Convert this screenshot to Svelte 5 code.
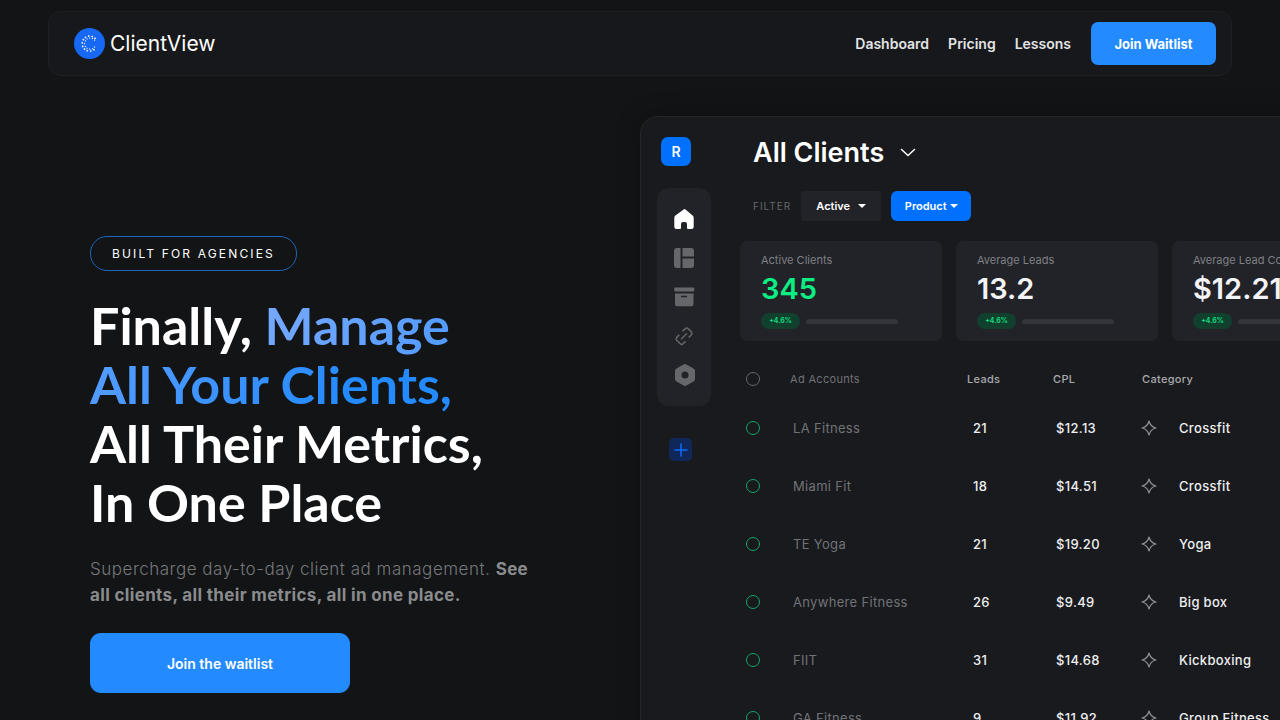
<script lang="ts">
	interface Stat {
		label: string;
		value: string;
		change: string;
		positive?: boolean;
	}

	interface Account {
		name: string;
		leads: number;
		cpl: string;
		category: string;
	}

	const links = ['Dashboard', 'Pricing', 'Lessons'];

	const stats: Stat[] = [
		{ label: 'Active Clients', value: '345', change: '+4.6%', positive: true },
		{ label: 'Average Leads', value: '13.2', change: '+4.6%' },
		{ label: 'Average Lead Cost', value: '$12.21', change: '+4.6%' }
	];

	const accounts: Account[] = [
		{ name: 'LA Fitness', leads: 21, cpl: '$12.13', category: 'Crossfit' },
		{ name: 'Miami Fit', leads: 18, cpl: '$14.51', category: 'Crossfit' },
		{ name: 'TE Yoga', leads: 21, cpl: '$19.20', category: 'Yoga' },
		{ name: 'Anywhere Fitness', leads: 26, cpl: '$9.49', category: 'Big box' },
		{ name: 'FIIT', leads: 31, cpl: '$14.68', category: 'Kickboxing' },
		{ name: 'GA Fitness', leads: 9, cpl: '$11.92', category: 'Group Fitness' }
	];
</script>

<div class="page">
	<header class="navbar">
		<a class="brand" href="/">
			<svg width="31" height="31" viewBox="0 0 31 31" aria-hidden="true">
				<circle cx="15.500" cy="15.500" r="15.500" fill="#1769f5" />
				<g fill="none" stroke="#fff" stroke-linecap="round">
					<path d="M21 10.300A7.500 7.500 0 1 0 21 20.900" stroke-width="1.700" stroke-dasharray="0.100 3.200" />
					<path d="M20.600 12.200A5.600 5.600 0 1 0 20.600 19" stroke-width="1.200" stroke-dasharray="0.100 2.600" />
				</g>
			</svg>
			<span>ClientView</span>
		</a>
		<nav>
			{#each links as link}
				<a href="#{link.toLowerCase()}">{link}</a>
			{/each}
			<button class="join" type="button">Join Waitlist</button>
		</nav>
	</header>

	<main class="hero">
		<section class="intro">
			<span class="tag">BUILT FOR AGENCIES</span>
			<h1>
				Finally, <span>Manage<br />All Your Clients,</span><br />
				All Their Metrics,<br />
				In One Place
			</h1>
			<p>
				Supercharge day-to-day client ad management.
				<strong>See all clients, all their metrics, all in one place.</strong>
			</p>
			<button class="cta" type="button">Join the waitlist</button>
		</section>

		<section class="panel" aria-label="All Clients">
			<aside>
				<div class="avatar">R</div>
				<div class="rail">
					<button type="button" class="active" aria-label="Home">
						<svg viewBox="0 0 22 22"><path d="M11 1.200 2.400 7.600Q1.300 8.500 1.300 10v8.800Q1.300 21 3.500 21H7q1 0 1-1v-4q0-2 2-2h2q2 0 2 2v4q0 1 1 1h3.500q2.200 0 2.200-2.200V10q0-1.500-1.100-2.400L12.500 1.500q-.8-.7-1.500-.3Z" /></svg>
					</button>
					<button type="button" aria-label="Layout">
						<svg viewBox="0 0 22 22"><path d="M4 1h3.500v20H4a3 3 0 0 1-3-3V4a3 3 0 0 1 3-3Zm5.500 0H18a3 3 0 0 1 3 3v5.500H9.500Zm0 10.500H21V18a3 3 0 0 1-3 3H9.500Z" /></svg>
					</button>
					<button type="button" aria-label="Archive">
						<svg viewBox="0 0 22 22"><path d="M2 1.500h18.500q.7 0 .7.800v2.500q0 .7-.7.700H2q-.7 0-.7-.7V2.300q0-.8.700-.8Z" /><path fill-rule="evenodd" d="M2 7.500h18.500v10.700q0 2-2 2H4q-2 0-2-2Zm6 2.300v1.400h6V9.800Z" /></svg>
					</button>
					<button type="button" aria-label="Links">
						<svg viewBox="0 0 22 22"><g fill="none" stroke="currentColor" stroke-width="1.500" stroke-linejoin="round"><path d="m9.500 6.300 2.800-2.700q1.400-1.300 2.800 0l3.300 3.300q1.300 1.400 0 2.800l-2.800 2.800" /><path d="m12.500 16.400-2.400 2.400q-1.400 1.400-2.800 0L3.700 15.200q-1.300-1.400 0-2.800l2.600-2.600" /><path d="m8 14.200 6-6" /></g></svg>
					</button>
					<button type="button" aria-label="Settings">
						<svg viewBox="0 0 22 22"><path fill-rule="evenodd" d="M10.500.5q1.500-.8 3 0l7 4q1.500.9 1.500 2.500v8q0 1.600-1.500 2.500l-7 4q-1.500.8-3 0l-7-4Q2 16.600 2 15V7q0-1.600 1.500-2.500Zm1.500 7a3.500 3.500 0 1 0 0 7 3.500 3.500 0 0 0 0-7Z" /></svg>
					</button>
				</div>
				<button class="add" type="button" aria-label="Add">
					<svg width="14" height="14" viewBox="0 0 14 14"><path d="M7 1v12M1 7h12" stroke="#0a6cff" stroke-width="1.500" stroke-linecap="round" /></svg>
				</button>
			</aside>

			<div class="content">
				<h2>
					All Clients
					<svg width="16" height="10" viewBox="0 0 16 10" aria-hidden="true"><path d="m1.500 1.500 6.500 6 6.500-6" fill="none" stroke="#fff" stroke-width="1.500" stroke-linecap="round" stroke-linejoin="round" /></svg>
				</h2>
				<div class="filters">
					<span>FILTER</span>
					<button type="button">Active <i class="caret"></i></button>
					<button type="button" class="product">Product <i class="caret"></i></button>
				</div>

				<div class="stats">
					{#each stats as stat}
						<article>
							<h3>{stat.label}</h3>
							<strong class:positive={stat.positive}>{stat.value}</strong>
							<div class="trend">
								<span>{stat.change}</span>
								<div class="bar"></div>
							</div>
						</article>
					{/each}
				</div>

				<table>
					<colgroup>
						<col class="col-state" />
						<col class="col-name" />
						<col class="col-leads" />
						<col class="col-cpl" />
						<col />
					</colgroup>
					<thead>
						<tr>
							<th><span class="ring"></span></th>
							<th class="muted">Ad Accounts</th>
							<th>Leads</th>
							<th>CPL</th>
							<th>Category</th>
						</tr>
					</thead>
					<tbody>
						{#each accounts as account}
							<tr>
								<td><span class="ring live"></span></td>
								<td class="muted">{account.name}</td>
								<td class="leads">{account.leads}</td>
								<td>{account.cpl}</td>
								<td>
									<div class="category">
										<svg width="16" height="16" viewBox="0 0 16 16" aria-hidden="true"><path d="M8 1q1.300 5.700 7 7-5.700 1.300-7 7-1.300-5.700-7-7 5.700-1.300 7-7Z" fill="none" stroke="#8d8f96" stroke-width="1.200" stroke-linejoin="round" /></svg>
										{account.category}
									</div>
								</td>
							</tr>
						{/each}
					</tbody>
				</table>
			</div>
		</section>
	</main>
</div>

<style>
	:global(html) {
		scrollbar-width: none;
	}

	:global(body) {
		background: #121416;
	}

	.page {
		color: #fff;
		font-family: Inter, 'Liberation Sans', sans-serif;
		overflow: hidden;
		padding-top: 11px;
	}

	.page * {
		box-sizing: border-box;
	}

	button {
		border: 0;
		color: inherit;
		cursor: pointer;
		font-family: inherit;
		padding: 0;
	}

	a {
		color: inherit;
		text-decoration: none;
	}

	.navbar {
		align-items: center;
		background: #17181b;
		border: 1px solid #1f2023;
		border-radius: 13px;
		display: flex;
		height: 65px;
		justify-content: space-between;
		margin: 0 48px;
		padding: 0 15px 0 25px;
	}

	.brand {
		align-items: center;
		display: flex;
		font-size: 21px;
		gap: 5px;
	}

	nav {
		align-items: center;
		color: #e4e4e6;
		display: flex;
		font-size: 14px;
		font-weight: 600;
		gap: 19px;
	}

	.join {
		background: #248aff;
		border-radius: 7px;
		color: #fff;
		font-size: 13px;
		font-weight: 700;
		height: 43px;
		margin-left: 1px;
		width: 125px;
	}

	.hero {
		display: grid;
		grid-template-columns: minmax(0, 1fr) minmax(0, 1fr);
		margin-top: 40px;
	}

	.intro {
		padding: 120px 20px 28px 90px;
	}

	.tag {
		align-items: center;
		border: 1px solid #1d66b8;
		border-radius: 17px;
		display: inline-flex;
		font-size: 12px;
		height: 35px;
		letter-spacing: 0.18em;
		padding: 0 21px;
	}

	h1 {
		font-family: Lato, Inter, sans-serif;
		font-size: 52px;
		font-weight: 700;
		line-height: 59px;
		margin: 25px 0 24px;
		white-space: nowrap;
	}

	h1 span {
		background: linear-gradient(120deg, #78a9ff, #248aff 80%);
		background-clip: text;
		color: transparent;
	}

	p {
		color: #77787a;
		font-size: 17px;
		font-weight: 300;
		letter-spacing: 0.03em;
		line-height: 26px;
		margin: 0 0 25px;
		max-width: 450px;
	}

	p strong {
		color: #8a8b8d;
		font-weight: 700;
		letter-spacing: 0.02em;
	}

	.cta {
		background: #248aff;
		border-radius: 11px;
		font-size: 14px;
		font-weight: 600;
		height: 60px;
		width: 260px;
	}

	.panel {
		background: #191a1d;
		border: 1px solid #242529;
		border-radius: 18px;
		box-shadow: 0 0 24px rgb(0, 0, 0, 0.25);
		display: flex;
		gap: 29px;
		min-width: 780px;
		padding: 20px 16px;
	}

	aside {
		flex: 0 0 54px;
	}

	.avatar {
		align-items: center;
		background: #0070ff;
		border-radius: 7px;
		display: flex;
		font-size: 14px;
		font-weight: 600;
		height: 29px;
		justify-content: center;
		margin-left: 4px;
		width: 30px;
	}

	.rail {
		align-items: center;
		background: #222328;
		border-radius: 12px;
		color: #66676b;
		display: flex;
		flex-direction: column;
		gap: 17px;
		margin: 22px 0 32px;
		padding: 20px 0;
	}

	.rail button {
		background: none;
		height: 22px;
		width: 22px;
	}

	.rail .active {
		color: #fff;
	}

	.rail svg {
		display: block;
		fill: currentColor;
	}

	.add {
		background: #10275a;
		border-radius: 5px;
		display: grid;
		height: 23px;
		margin-left: 12px;
		place-items: center;
		width: 23px;
	}

	.content {
		flex: 1;
	}

	h2 {
		align-items: center;
		display: flex;
		font-size: 27px;
		font-weight: 600;
		gap: 16px;
		line-height: 32px;
		margin: 0 0 22px 13px;
	}

	.filters {
		align-items: center;
		display: flex;
		gap: 10px;
		margin-left: 13px;
	}

	.filters span {
		color: #66676a;
		font-size: 10px;
		letter-spacing: 0.1em;
	}

	.filters button {
		align-items: center;
		background: #222328;
		border-radius: 3px;
		display: flex;
		font-size: 11px;
		font-weight: 600;
		gap: 8px;
		height: 30px;
		justify-content: center;
		width: 80px;
	}

	.filters .product {
		background: #0070ff;
		border-radius: 6px;
		gap: 3px;
	}

	.caret {
		border: 4px solid transparent;
		border-bottom: 0;
		border-top-color: #fff;
	}

	.stats {
		display: flex;
		gap: 14px;
		margin-top: 20px;
	}

	article {
		background: #222328;
		border-radius: 7px;
		flex: 0 0 202px;
		height: 100px;
		padding: 11px 21px;
	}

	h3 {
		color: #7f8084;
		font-size: 11px;
		font-weight: 400;
		line-height: 16px;
		margin: 0 0 4px;
	}

	article strong {
		color: #f3f4f8;
		display: block;
		font-size: 29px;
		font-weight: 600;
		line-height: 34px;
	}

	article .positive {
		color: #0aee83;
	}

	.trend {
		align-items: center;
		display: flex;
		gap: 6px;
		margin-top: 7px;
	}

	.trend span {
		background: #11402f;
		border-radius: 8px;
		color: #0fe482;
		font-size: 7px;
		font-weight: 600;
		line-height: 16px;
		text-align: center;
		width: 39px;
	}

	.bar {
		background: #34353a;
		border-radius: 3px;
		height: 5px;
		width: 92px;
	}

	table {
		border-spacing: 0;
		letter-spacing: 0.02em;
		margin: 18px 0 0 6px;
		table-layout: fixed;
		width: 560px;
	}

	.col-state {
		width: 44px;
	}

	.col-name {
		width: 177px;
	}

	.col-leads {
		width: 86px;
	}

	.col-cpl {
		width: 89px;
	}

	th {
		color: #a9aaad;
		font-size: 11px;
		font-weight: 500;
		height: 40px;
		padding: 0;
		text-align: left;
	}

	td {
		color: #eeeff2;
		font-size: 13px;
		font-weight: 500;
		height: 58px;
		padding: 0 0 0 3px;
	}

	td:first-child {
		padding-left: 0;
	}

	.leads {
		padding-left: 6px;
	}

	th.muted,
	td.muted {
		color: #717276;
		font-weight: 400;
	}

	.ring {
		border: 1px solid #68696d;
		border-radius: 50%;
		display: block;
		height: 14px;
		width: 14px;
	}

	.live {
		border-color: #12a56b;
	}

	.category {
		align-items: center;
		display: flex;
		gap: 22px;
		margin-left: -4px;
	}

	@media (max-width: 1000px) {
		.hero {
			grid-template-columns: minmax(0, 1fr);
		}

		.intro {
			padding: 48px 24px;
		}

		.navbar {
			margin: 0 16px;
		}
	}
</style>
